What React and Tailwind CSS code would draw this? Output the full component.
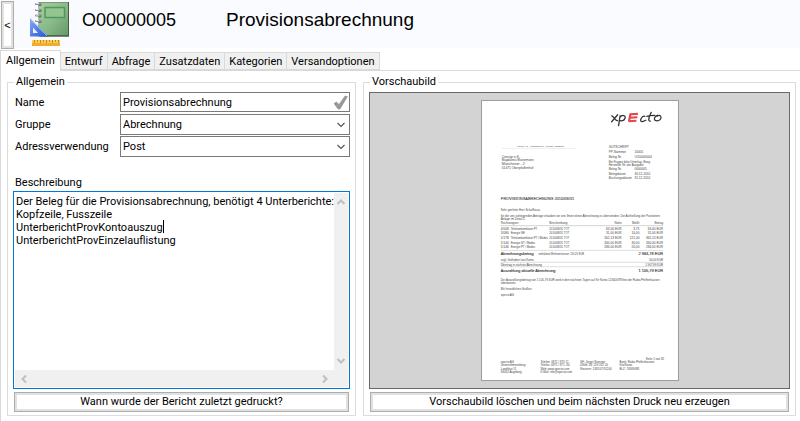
import React from 'react';

const TABS = ['Allgemein', 'Entwurf', 'Abfrage', 'Zusatzdaten', 'Kategorien', 'Versandoptionen'];

const DESCRIPTION = [
  'Der Beleg für die Provisionsabrechnung, benötigt 4 Unterberichte:',
  'Kopfzeile, Fusszeile',
  'UnterberichtProvKontoauszug',
  'UnterberichtProvEinzelauflistung',
].join('\n');

function ReportIcon() {
  return (
    <svg width="42" height="46" viewBox="0 0 42 46" aria-hidden="true">
      <defs>
        <linearGradient id="book" x1="0" y1="0" x2="1" y2="1">
          <stop offset="0" stopColor="#a5cf9f" />
          <stop offset="0.5" stopColor="#8bbb8b" />
          <stop offset="1" stopColor="#659a68" />
        </linearGradient>
        <linearGradient id="tri" x1="0" y1="0" x2="1" y2="1">
          <stop offset="0" stopColor="#88aef5" />
          <stop offset="1" stopColor="#2353cf" />
        </linearGradient>
      </defs>
      <rect x="8.500" y="1" width="30.500" height="34.500" fill="#4f7650" />
      <rect x="9" y="1.500" width="29" height="32.500" fill="url(#book)" />
      <path d="M38.500 1v34M10 35h29" stroke="#4a584a" />
      <rect x="15" y="6.500" width="19.500" height="10" fill="#93c590" stroke="#56955a" strokeWidth="1.500" />
      {[3, 9, 14.5, 20].map((y) => (
        <g key={y}>
          <circle cx="10" cy={y + 0.5} r="1.500" fill="#51634f" />
          <path d={`M6 ${y}h4.500`} stroke="#8d8d98" strokeWidth="2" strokeLinecap="round" />
          <path d={`M6 ${y - 0.5}h3`} stroke="#e4e4ec" />
        </g>
      ))}
      <path d="M0 17 18 35.500H0Z" fill="url(#tri)" />
      <path d="M3 26.500 8 32H3Z" fill="#edf3ff" />
      <path d="M1 19 17 35" stroke="#aac7fb" strokeWidth="0.700" />
      <rect x="2" y="39" width="28" height="6" fill="#f2ac2e" />
      <rect x="2" y="39" width="28" height="3" fill="#fbce58" />
      <path d="M4.500 39v3M7.500 39v2M10.500 39v3M13.500 39v2M16.500 39v3M19.500 39v2M22.500 39v3M25.500 39v2M28.500 39v3" stroke="#b97a12" strokeWidth="0.800" />
    </svg>
  );
}

function Chevron({ className, color = '#555', dir = 'down', bold = false }) {
  const paths = {
    down: 'M1.500 3 5 6.500 8.500 3',
    up: 'M1.500 7 5 3.500 8.500 7',
    left: 'M7 1.500 3.500 5 7 8.500',
    right: 'M3 1.500 6.500 5 3 8.500',
  };
  return (
    <svg className={className} width="10" height="10" viewBox="0 0 10 10" fill="none" stroke={color} strokeWidth={bold ? 2 : 1.2} aria-hidden="true">
      <path d={paths[dir]} />
    </svg>
  );
}

function SelectRow({ id, label, value }) {
  return (
    <>
      <label htmlFor={id} className="pl-0.5">{label}</label>
      <div className="relative">
        <select id={id} defaultValue={value} className="block h-[21px] w-full appearance-none border border-[#7a7a7a] bg-white pl-0.5 outline-none">
          <option>{value}</option>
        </select>
        <Chevron className="pointer-events-none absolute top-[6px] right-1" />
      </div>
    </>
  );
}

function Group({ title, className, children }) {
  return (
    <fieldset className={`flex min-w-0 flex-col border border-[#dcdcdc] ${className}`}>
      <legend className="ml-px h-3 px-0.5 leading-3">{title}</legend>
      {children}
    </fieldset>
  );
}

function PushButton({ children }) {
  return (
    <button type="button" className="mx-px h-5 border border-[#adadad] bg-white text-center leading-4 outline-2 -outline-offset-3 outline-[#e1e1e1]">
      {children}
    </button>
  );
}

const ROWS = [
  ['4/008', 'Telekomkomfation PT', '2010/08/31 TOT', '63,00 EUR', '3,73', '63,00 EUR'],
  ['3/080', 'Energie NE', '2010/08/31 TOT', '31,00 EUR', '10,00', '31,00 EUR'],
  ['5/178', 'Telekomkomfation PT / Modes', '2010/08/31 TOT', '302,13 EUR', '121,00', '362,13 EUR'],
  ['5/140', 'Energie NT / Modes', '2010/08/31 TOT', '340,00 EUR', '30,00', '340,00 EUR'],
  ['5/146', 'Energie PT / Modes', '2010/08/31 TOT', '284,00 EUR', '20,00', '284,00 EUR'],
];

const FOOTER = [
  [19, ['xpecto AG', 'Unternehmensberg.', 'Landshut 11', '84032 Augsburg']],
  [59, ['Telefon: 0871 / 873 11', 'Telefax: 0871 / 871 -84', 'Web: www.xpecto.com', 'E-Mail: info@xpecto.com']],
  [99, ['GF: Jörget Stuerger', 'UStId: DE 229 312 50', 'Steuernr: 133/107/31200']],
  [139, ['Bank: Raiba Pfeffenhausen', 'Kto/Konto', 'BLZ: 74369088']],
];

function ReportPreview() {
  return (
    <svg className="h-[281px] w-[198px] border border-[#9d9d9d] bg-white" viewBox="0 0 198 281" fontFamily="'Liberation Sans', Arial, sans-serif" fontSize="3.600" fill="#444" role="img" aria-label="Vorschaubild">
      <g fill="none" stroke="#333" strokeWidth="1.300" strokeLinecap="round" strokeLinejoin="round">
        <path d="M131 14.500c2 0 3 5 6 5M137 13.500l-6 7" />
        <path d="M139.500 14.500l-1.500 10M139.500 16c2-3 6-2 5 1s-4 3-5.500 2" />
        <path d="M164.500 15c-3-1-6 5-3 5.500 1.500 0 3-1 4-1.500" />
        <path d="M171 11c-2 4-4 9-1 9M166.500 15c3-1 6-1 8-1" />
        <path d="M177 14c-3 1-4 5-1 5.500s6-2 4.500-4.500c-1-1.500-3-1-3.500 0" />
      </g>
      <path d="M149.500 13l8-.5M149 16.500l8-.5M148 20l8-.5M150 12.500l-1.500 7.500" stroke="#e64550" strokeWidth="2.200" fill="none" />
      <path d="M20 47.500h75" stroke="#ddd" strokeWidth="0.500" />
      <text x="35" y="46.500" fontSize="2.500">xpecto AG - Landshut 11 - 84032 Augsburg</text>
      <text x="20" y="57">Consip e.K.</text>
      <text x="20" y="60.500" fontSize="3">Magdalena Mustermann</text>
      <text x="20" y="64">Münchener - 2</text>
      <text x="20" y="68" fontSize="3.300">01471 Oberpfaffenhof</text>
      <g fontSize="3.200">
        <text x="128" y="47">GUTSCHRIFT</text>
        <text x="128" y="52.500">PP-Nummer</text><text x="154" y="52.500">10001</text>
        <text x="128" y="57.500">Beleg Nr.</text><text x="154" y="57.500">O/10000004</text>
        <text x="128" y="62.500" fontSize="3">Bei Fragen bitte Unterlag. Bezg.</text>
        <text x="128" y="65" fontSize="3">Hersteller Nr. der Ausgabe:</text>
        <text x="128" y="69.500">Beleg Nr.</text><text x="154" y="69.500">0000005</text>
        <text x="128" y="74.500">Belegdatum</text><text x="154" y="74.500">30.12.2010</text>
        <text x="128" y="78.500">Buchungsdatum</text><text x="154" y="78.500">31.12.2010</text>
      </g>
      <text x="19" y="99.500" fontSize="4" stroke="#444" strokeWidth="0.100">PROVISIONSABRECHNUNG 2010/08/31</text>
      <text x="19" y="110.500" fontSize="2.900">Sehr geehrter Herr Schaffhaus,</text>
      <text x="19" y="116.500" fontSize="3">für die uns vorliegenden Anträge erlauben wir uns Ihnen diese Abrechnung zu übersenden. Die Aufstellung der Positionen</text>
      <text x="19" y="119.500" fontSize="3">Anlage im Detail 2.</text>
      <text x="19" y="124" fontSize="3">Rechnungsnr.</text><text x="68" y="124" fontSize="3">Beschreibung</text>
      <g textAnchor="end" fontSize="3">
        <text x="141" y="124">Netto</text><text x="159" y="124">MwSt</text><text x="183" y="124">Betrag</text>
      </g>
      <path d="M19 125.500h164" stroke="#aaa" strokeWidth="0.500" />
      {ROWS.map((row, i) => (
        <g key={row[0]} fontSize="3.200">
          <text x="19" y={129.5 + i * 4.7}>{row[0]}</text>
          <text x="29" y={129.5 + i * 4.7} fontSize="2.800">{row[1]}</text>
          <text x="68" y={129.5 + i * 4.7} fontSize="2.800">{row[2]}</text>
          <g textAnchor="end">
            <text x="141" y={129.5 + i * 4.7}>{row[3]}</text>
            <text x="159" y={129.5 + i * 4.7}>{row[4]}</text>
            <text x="183" y={129.5 + i * 4.7}>{row[5]}</text>
          </g>
        </g>
      ))}
      <path d="M19 150.500h164M19 162.500h164M19 167h164" stroke="#bbb" strokeWidth="0.500" />
      <g fill="#222" fontSize="4" stroke="#444" strokeWidth="0.100">
        <text x="19" y="155.500" fontSize="3.800">Abrechnungsbetrag</text>
        <text x="183" y="155.500" textAnchor="end">2 963,78 EUR</text>
        <text x="19" y="172.500" fontSize="3.800">Auszahlung aktuelle Abrechnung</text>
        <text x="183" y="172.500" textAnchor="end">1 105,79 EUR</text>
      </g>
      <g fontSize="2.900">
        <text x="57" y="155.500" fontSize="2.600">enthaltene Mehrwertsteuer: 119,25 EUR</text>
        <text x="19" y="161.500">zzgl. Guthaben laut Konto</text><text x="183" y="161.500" textAnchor="end">50,00 EUR</text>
        <text x="19" y="166">Übertrag in nächste Abrechnung</text><text x="183" y="166" textAnchor="end">1 907,99 EUR</text>
        <text x="19" y="181.500">Der Auszahlungsbetrag von 1 105,79 EUR wird in den nächsten Tagen auf Ihr Konto 123456789 bei der Raiba Pfeffenhausen</text>
        <text x="19" y="184.500">überwiesen.</text>
        <text x="19" y="190.500">Mit freundlichen Grüßen</text>
        <text x="19" y="196.500">xpecto AG</text>
        <text x="184" y="261" textAnchor="end">Seite 1 von 82</text>
        {FOOTER.map(([x, lines]) => lines.map((line, i) => (
          <text key={line} x={x} y={264 + i * 3.5}>{line}</text>
        )))}
      </g>
    </svg>
  );
}

export default function App() {
  return (
    <div className="flex min-h-screen flex-col bg-white font-[Roboto,'Liberation_Sans',sans-serif] text-[11px] leading-[13px] text-black">
      <header className="flex h-12 items-start bg-[#f9fbfe] font-['Liberation_Sans',Arial,sans-serif]">
        <button type="button" aria-label="Zurück" className="mt-px ml-px h-12 w-[13px] shrink-0 border border-[#adadad] bg-white text-[11px] outline-2 -outline-offset-3 outline-[#e1e1e1]">&lt;</button>
        <div className="mt-px ml-4 shrink-0"><ReportIcon /></div>
        <h1 className="flex pt-2 pl-2.5 leading-6">
          <span className="w-36 text-[18px]">O00000005</span>
          <span className="text-[19px]">Provisionsabrechnung</span>
        </h1>
      </header>

      <nav className="relative z-10 mt-0.5 flex h-[21px] items-end" role="tablist">
        {TABS.map((tab, i) => (
          <button
            key={tab}
            type="button"
            role="tab"
            aria-selected={i === 0}
            className={i === 0
              ? 'h-[21px] border border-b-0 border-[#d9d9d9] bg-white px-[5px] pb-0.5'
              : 'mb-px h-[18px] border border-l-0 border-[#d9d9d9] bg-[#f0f0f0] px-1'}
          >
            {tab}
          </button>
        ))}
      </nav>

      <main className="-mt-px flex flex-1 gap-[7px] border-t border-l border-[#d9d9d9] py-[5px] pr-1 pl-1.5">
        <Group title="Allgemein" className="w-[349px] px-[5px] pb-[3px]">
          <div className="mt-1 grid grid-cols-[107px_1fr] items-center gap-y-px">
            <label htmlFor="name" className="pl-0.5">Name</label>
            <div className="relative pb-px">
              <input id="name" defaultValue="Provisionsabrechnung" className="block h-5 w-full border border-[#7a7a7a] pl-0.5 outline-none" />
              <svg className="absolute top-[3px] right-0.5" width="15" height="15" viewBox="0 0 15 15" aria-hidden="true">
                <path d="M1 8.500 3.500 7 6 9.500 12 1 14.500 1.500 7 14H5Z" fill="#999" stroke="#888" strokeWidth="0.500" />
              </svg>
            </div>
            <SelectRow id="group" label="Gruppe" value="Abrechnung" />
            <SelectRow id="address" label="Adressverwendung" value="Post" />
          </div>
          <label htmlFor="description" className="mt-[19px] mb-0.5 pl-0.5">Beschreibung</label>
          <div className="relative grid flex-1 grid-cols-[1fr_14px] grid-rows-[1fr_17px] border border-[#0078d7] p-px">
            <textarea id="description" defaultValue={DESCRIPTION} wrap="off" spellCheck={false} className="resize-none overflow-hidden pt-0.5 pl-px leading-[13px] outline-none" />
            <span className="absolute top-7 left-[149px] h-[13px] w-px bg-black" aria-hidden="true" />
            <div className="flex flex-col items-center justify-between bg-[#f0f0f0] py-1">
              <Chevron dir="up" color="#bfbfbf" bold />
              <Chevron color="#bfbfbf" bold />
            </div>
            <div className="flex items-center justify-between bg-[#f0f0f0] px-1">
              <Chevron dir="left" color="#bfbfbf" bold />
              <Chevron dir="right" color="#bfbfbf" bold />
            </div>
            <div className="bg-[#f0f0f0]" />
          </div>
          <div className="mt-[3px] flex flex-col"><PushButton>Wann wurde der Bericht zuletzt gedruckt?</PushButton></div>
        </Group>

        <Group title="Vorschaubild" className="flex-1 px-[5px] pb-[3px]">
          <div className="mt-1 flex flex-1 items-center justify-center border border-[#696969] bg-[#d3d3d3]">
            <ReportPreview />
          </div>
          <div className="mt-[3px] flex flex-col"><PushButton>Vorschaubild löschen und beim nächsten Druck neu erzeugen</PushButton></div>
        </Group>
      </main>
    </div>
  );
}
